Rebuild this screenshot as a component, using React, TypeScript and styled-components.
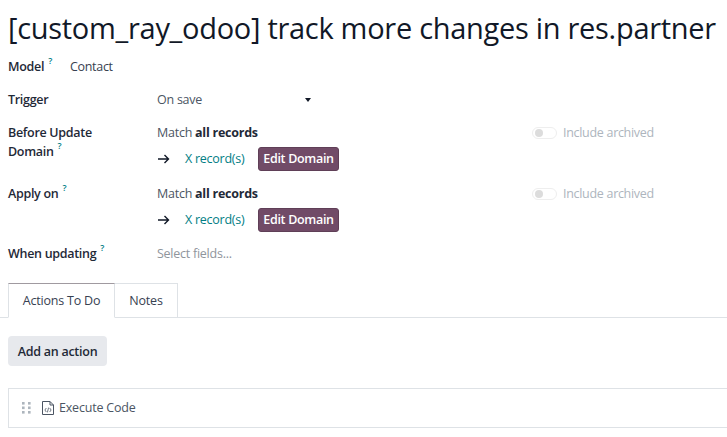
import React from "react";
import styled, { createGlobalStyle } from "styled-components";

const Global = createGlobalStyle`
  html, body { margin: 0; padding: 0; background: #fff; overflow: hidden; }
  body { font-family: "Open Sans", "Noto Sans", sans-serif; font-size: 13px; color: #374151; }
`;
const Page = styled.div`
  width: 727px; height: 437px; overflow: hidden; display: flex; flex-direction: column;
`;
const Title = styled.h1`
  margin: 9px 0 0 8px; font-weight: 400; font-size: 29px; line-height: 38px; color: #111827; white-space: nowrap;
  letter-spacing: -0.29px; height: 38px;
`;
const ModelRow = styled.div`
  display: flex; align-items: baseline; margin: 10px 0 0 8px; height: 20px;
`;
const Label = styled.div`
  font-weight: 600; color: #1f2937; font-size: 12.5px; line-height: 19px; letter-spacing: -0.3px;
`;
const Help = styled.sup`
  color: #017e84; font-size: 9px; font-weight: 600; margin-left: 4px; line-height: 0; position: relative; top: -2px;
`;
const ModelValue = styled.span`
  margin-left: 18px; letter-spacing: -0.3px; font-size: 12.5px;
`;
const Row = styled.div<{ $top: number; $h: number }>`
  display: grid; grid-template-columns: 149px 375px 1fr; margin: ${p => p.$top}px 0 0 8px; height: ${p => p.$h}px;
`;
const Placeholder = styled.div`
  font-size: 12.5px; line-height: 19px; letter-spacing: -0.25px; color: #8f959c;
`;
const SelectBox = styled.div`
  width: 152px; display: flex; justify-content: space-between; align-items: center; height: 19px;
  font-size: 12.5px; letter-spacing: -0.25px; color: #4b5563;
`;
const Caret = styled.span`
  width: 0; height: 0; border-left: 3px solid transparent; border-right: 3px solid transparent; border-top: 4px solid #111827;
  margin-right: -2px;
`;
const Match = styled.div`
  font-size: 12.5px; line-height: 19px; letter-spacing: -0.25px; color: #4b5563;
  b { font-weight: 700; color: #1f2937; }
`;
const RecordLine = styled.div`
  display: flex; align-items: center; height: 25px; margin-top: 4px;
`;
const Records = styled.span`
  color: #017e84; font-size: 12.5px; letter-spacing: -0.25px; margin-left: 15px; width: 73px;
`;
const EditButton = styled.div`
  width: 81px; height: 24px; box-sizing: border-box; background: #714b67; border: 1px solid #5f3f57; border-radius: 3px;
  color: #fff; font-weight: 600; font-size: 12.5px; letter-spacing: -0.3px; display: flex; align-items: center; justify-content: center;
`;
const Archive = styled.div`
  display: flex; align-items: center; height: 19px; gap: 6px; color: #adb5bd; font-size: 12.5px; letter-spacing: -0.3px;
`;
const Toggle = styled.div`
  width: 25px; height: 12px; box-sizing: border-box; border: 1px solid #eeeeee; border-radius: 7px; display: flex; align-items: center; padding-left: 2px;
  &::before { content: ""; width: 8px; height: 8px; border-radius: 50%; background: #dcdcdc; }
`;
const Tabs = styled.div`
  display: flex; margin-top: 20px; height: 35px; box-sizing: border-box; padding-left: 8px; border-bottom: 1px solid #dee2e6;
`;
const Tab = styled.div<{ $active?: boolean }>`
  height: 35px; box-sizing: border-box; display: flex; align-items: center; justify-content: center;
  width: ${p => (p.$active ? 107 : 63)}px; font-size: 12.5px; letter-spacing: -0.2px; color: #374151;
  border: 1px solid #dee2e6; border-left: ${p => (p.$active ? "1px solid #dee2e6" : "none")};
  border-top-color: ${p => (p.$active ? "#a09aa0" : "#dee2e6")};
  border-bottom-color: ${p => (p.$active ? "#fff" : "#dee2e6")};
`;
const AddButton = styled.div`
  margin: 18px 0 0 8px; width: 99px; height: 30px; border-radius: 4px; background: #e7e9ed; color: #1f2937;
  font-weight: 600; font-size: 12.5px; letter-spacing: -0.25px; display: flex; align-items: center; justify-content: center;
`;
const ActionRow = styled.div`
  margin: 22px 0 0 8px; height: 40px; box-sizing: border-box; border: 1px solid #dee2e6; border-right: none;
  display: flex; align-items: center; padding: 0 0 1px 13px; color: #4b5563; font-size: 12.5px; letter-spacing: -0.2px;
`;
const ActionName = styled.span`
  margin-left: 5px;
`;
const GripIcon = styled.svg`
  margin-right: 11px;
`;

const Arrow = () => (
  <svg width="13" height="10" viewBox="0 0 13 10" fill="none" stroke="#111827" strokeWidth="1.4">
    <path d="M1 5h10.5M7.5 1l4 4-4 4" />
  </svg>
);
const Grip = () => (
  <GripIcon width="9" height="12" viewBox="0 0 9 12" fill="#adb5bd">
    {[0, 4.5, 9].map(y => [0, 6].map(x => <rect key={`${x}-${y}`} x={x} y={y} width="2.6" height="2.6" />))}
  </GripIcon>
);
const CodeFile = () => (
  <svg width="12" height="14" viewBox="0 0 12 14" fill="none" stroke="#4b5563" strokeWidth="1">
    <path d="M1 .5h7l3.5 3.5v9.5H.5V.5zM8 .5V4h3.5" />
    <path d="M4.3 7 2.9 9l1.4 2M7.7 7l1.4 2-1.4 2M6.6 6.6 5.4 11.4" strokeWidth="0.8" />
  </svg>
);

const DomainBlock = () => (
  <div>
    <Match>Match <b>all records</b></Match>
    <RecordLine>
      <Arrow />
      <Records>X record(s)</Records>
      <EditButton>Edit Domain</EditButton>
    </RecordLine>
  </div>
);

const ArchiveToggle = () => (
  <Archive><Toggle />Include archived</Archive>
);

export default function App() {
  return (
    <Page>
      <Global />
      <Title>[custom_ray_odoo] track more changes in res.partner</Title>
      <ModelRow>
        <Label>Model<Help>?</Help></Label>
        <ModelValue>Contact</ModelValue>
      </ModelRow>
      <Row $top={13} $h={19}>
        <Label>Trigger</Label>
        <SelectBox>On save<Caret /></SelectBox>
      </Row>
      <Row $top={14} $h={47}>
        <Label>Before Update<br />Domain<Help>?</Help></Label>
        <DomainBlock />
        <ArchiveToggle />
      </Row>
      <Row $top={14} $h={47}>
        <Label>Apply on<Help>?</Help></Label>
        <DomainBlock />
        <ArchiveToggle />
      </Row>
      <Row $top={13} $h={19}>
        <Label>When updating<Help>?</Help></Label>
        <Placeholder>Select fields...</Placeholder>
      </Row>
      <Tabs>
        <Tab $active>Actions To Do</Tab>
        <Tab>Notes</Tab>
      </Tabs>
      <AddButton>Add an action</AddButton>
      <ActionRow>
        <Grip />
        <CodeFile />
        <ActionName>Execute Code</ActionName>
      </ActionRow>
    </Page>
  );
}
